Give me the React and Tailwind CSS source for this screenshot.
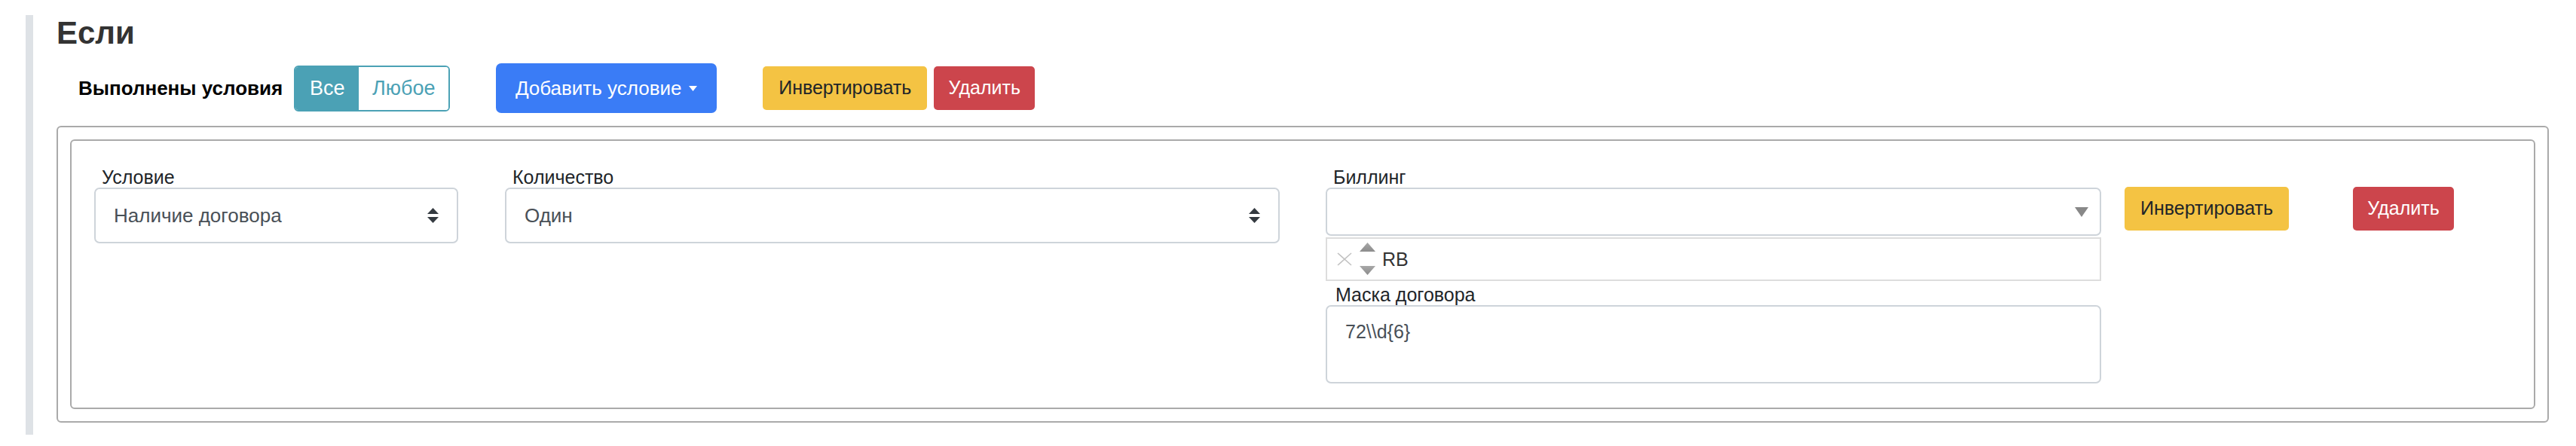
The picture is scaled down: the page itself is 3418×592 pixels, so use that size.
import React from "react";

function DoubleArrow() {
  return (
    <svg width="15" height="20" viewBox="0 0 15 20" className="shrink-0">
      <path d="M7.5 0 L15 8 L0 8 Z" fill="#343a40" />
      <path d="M0 12 L15 12 L7.5 20 Z" fill="#343a40" />
    </svg>
  );
}

function SelectBox({ value, width }) {
  return (
    <div
      className={`h-[74px] ${width} border-2 border-[#ced4da] rounded-[7px] bg-white flex items-center justify-between pl-[24px] pr-[24px]`}
    >
      <span className="text-[26px] text-[#495057] leading-none">{value}</span>
      <DoubleArrow />
    </div>
  );
}

function Label({ children }) {
  return (
    <div className="h-[27px] leading-[27px] text-[25px] text-[#212529] pl-[10px] whitespace-nowrap">
      {children}
    </div>
  );
}

export default function App() {
  return (
    <div className="w-[3418px] h-[592px] bg-white pt-[20px] pl-[34px] pr-[36px] font-['Liberation_Sans',Arial,sans-serif]">
      <div className="h-[557px] border-l-[10px] border-[#dee2e6] pl-[31px] pt-[3px]">
        <h3 className="h-[42px] text-[42px] leading-none font-bold text-[#333333]">Если</h3>

        <div className="mt-[19px] h-[66px] flex items-center pl-[29px]">
          <span className="text-[26px] font-bold text-black leading-none whitespace-nowrap">
            Выполнены условия
          </span>
          <div className="ml-[15px] flex h-[61px] w-[207px] rounded-[6px] border-2 border-[#4ba1b5] overflow-hidden">
            <div className="w-[84px] bg-[#4ba1b5] text-white text-[27px] flex items-center justify-center">
              Все
            </div>
            <div className="flex-1 bg-white text-[#4ba1b5] text-[27px] flex items-center justify-center">
              Любое
            </div>
          </div>
          <div className="ml-[61px] h-[66px] w-[293px] rounded-[7px] bg-[#3a7cf6] text-white text-[26px] flex items-center justify-center gap-[10px]">
            <span>Добавить условие</span>
            <svg width="11" height="7" viewBox="0 0 11 7">
              <path d="M0 0 L11 0 L5.5 7 Z" fill="#ffffff" />
            </svg>
          </div>
          <div className="ml-[61px] h-[58px] w-[218px] rounded-[5px] bg-[#f4c343] text-[#212529] text-[25px] flex items-center justify-center">
            Инвертировать
          </div>
          <div className="ml-[9px] h-[58px] w-[134px] rounded-[5px] bg-[#cc454c] text-white text-[25px] flex items-center justify-center">
            Удалить
          </div>
        </div>

        <div className="mt-[17px] h-[394px] border-2 border-[#aaaaaa] rounded-[6px] p-[16px]">
          <div className="h-[358px] border-2 border-[#aaaaaa] rounded-[6px] pt-[35px] pl-[30px] flex items-start">
            <div className="w-[483px] flex flex-col">
              <Label>Условие</Label>
              <SelectBox value="Наличие договора" width="w-[483px]" />
            </div>

            <div className="ml-[62px] w-[1028px] flex flex-col">
              <Label>Количество</Label>
              <SelectBox value="Один" width="w-[1028px]" />
            </div>

            <div className="ml-[61px] w-[1029px] flex flex-col">
              <Label>Биллинг</Label>
              <div className="h-[64px] border-2 border-[#ced4da] rounded-[7px] bg-white flex items-center justify-end pr-[15px]">
                <svg width="18" height="13" viewBox="0 0 18 13">
                  <path d="M0 0 L18 0 L9 13 Z" fill="#888888" />
                </svg>
              </div>
              <div className="mt-[2px] h-[58px] border-2 border-[#dddddd] bg-white flex items-center pl-[12px]">
                <svg width="22" height="18" viewBox="0 0 22 18" className="shrink-0">
                  <path d="M2 1 L20 17 M20 1 L2 17" stroke="#c2c2c2" strokeWidth="1.6" fill="none" />
                </svg>
                <svg width="21" height="44" viewBox="0 0 21 44" className="ml-[9px] shrink-0">
                  <defs>
                    <linearGradient id="tg" x1="0" y1="0" x2="0" y2="1">
                      <stop offset="0" stopColor="#a8a8a8" />
                      <stop offset="1" stopColor="#8c8c8c" />
                    </linearGradient>
                  </defs>
                  <path d="M10.5 0 L21 12 L0 12 Z" fill="url(#tg)" />
                  <path d="M0 31 L21 31 L10.5 43 Z" fill="url(#tg)" />
                </svg>
                <span className="ml-[9px] text-[25px] text-[#333333] leading-none">RB</span>
              </div>
              <div className="mt-[5px]">
                <Label>
                  <span className="-ml-[-3px]">Маска договора</span>
                </Label>
              </div>
              <textarea
                readOnly
                defaultValue={"72\\\\d{6}"}
                className="h-[104px] border-2 border-[#ced4da] rounded-[7px] bg-white resize-none outline-none pl-[24px] pt-[15px] text-[25px] leading-[36px] text-[#495057] font-['Liberation_Sans',Arial,sans-serif]"
              />
            </div>

            <div className="ml-[31px] mt-[26px] h-[58px] w-[218px] rounded-[5px] bg-[#f4c343] text-[#212529] text-[25px] flex items-center justify-center">
              Инвертировать
            </div>
            <div className="ml-[85px] mt-[26px] h-[58px] w-[134px] rounded-[5px] bg-[#cc454c] text-white text-[25px] flex items-center justify-center">
              Удалить
            </div>
          </div>
        </div>
      </div>
    </div>
  );
}
